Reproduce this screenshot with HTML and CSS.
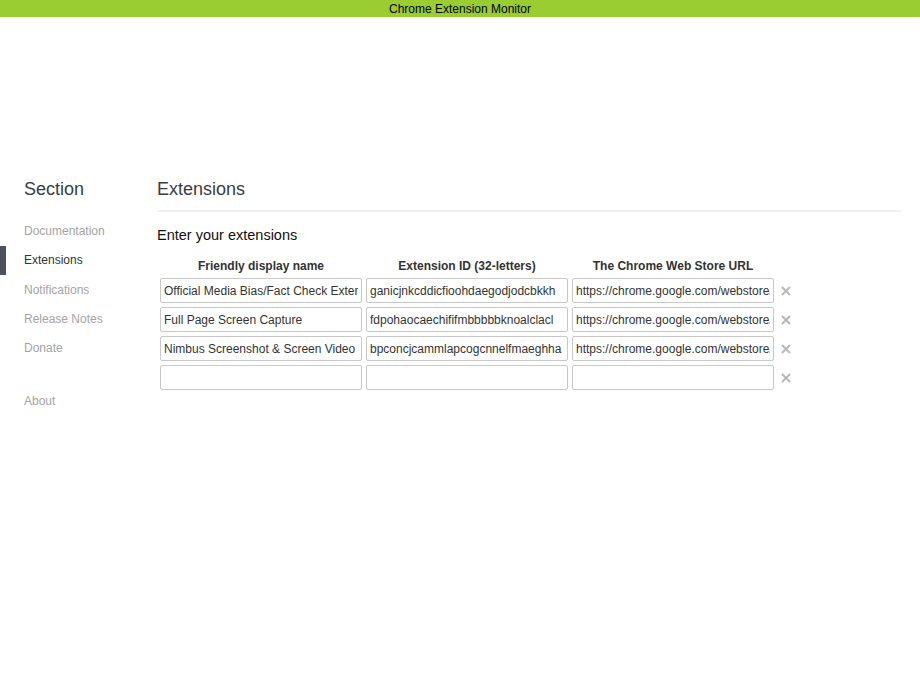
FILE: index.html
```html
<!DOCTYPE html>
<html>
<head>
<meta charset="utf-8">
<title>Chrome Extension Monitor</title>
<link rel="stylesheet" href="styles.css">
</head>
<body>
<div class="topbar">Chrome Extension Monitor</div>
<div class="layout">
  <aside class="sidebar">
    <h1 class="side-title">Section</h1>
    <ul class="nav">
      <li class="nav-item">Documentation</li>
      <li class="nav-item active">Extensions</li>
      <li class="nav-item">Notifications</li>
      <li class="nav-item">Release Notes</li>
      <li class="nav-item">Donate</li>
      <li class="nav-item about">About</li>
    </ul>
  </aside>
  <main class="main">
    <h1 class="page-title">Extensions</h1>
    <h2 class="subtitle">Enter your extensions</h2>
    <div class="ext-grid">
      <div class="col-head">Friendly display name</div>
      <div class="col-head">Extension ID (32-letters)</div>
      <div class="col-head">The Chrome Web Store URL</div>
      <div></div>

      <input class="field" type="text" value="Official Media Bias/Fact Check Extension">
      <input class="field" type="text" value="ganicjnkcddicfioohdaegodjodcbkkh">
      <input class="field" type="text" value="https://chrome.google.com/webstore/detail/ganicjnkcddicfioohdaegodjodcbkkh">
      <span class="remove"><svg viewBox="0 0 10 10" width="10" height="10"><path d="M1 1L9 9M9 1L1 9" stroke="#b8b8b8" stroke-width="2" fill="none"/></svg></span>

      <input class="field" type="text" value="Full Page Screen Capture">
      <input class="field" type="text" value="fdpohaocaechififmbbbbbknoalclacl">
      <input class="field" type="text" value="https://chrome.google.com/webstore/detail/fdpohaocaechififmbbbbbknoalclacl">
      <span class="remove"><svg viewBox="0 0 10 10" width="10" height="10"><path d="M1 1L9 9M9 1L1 9" stroke="#b8b8b8" stroke-width="2" fill="none"/></svg></span>

      <input class="field" type="text" value="Nimbus Screenshot &amp; Screen Video Recorder">
      <input class="field" type="text" value="bpconcjcammlapcogcnnelfmaeghha">
      <input class="field" type="text" value="https://chrome.google.com/webstore/detail/bpconcjcammlapcogcnnelfmaeghhagj">
      <span class="remove"><svg viewBox="0 0 10 10" width="10" height="10"><path d="M1 1L9 9M9 1L1 9" stroke="#b8b8b8" stroke-width="2" fill="none"/></svg></span>

      <input class="field" type="text" value="">
      <input class="field" type="text" value="">
      <input class="field" type="text" value="">
      <span class="remove"><svg viewBox="0 0 10 10" width="10" height="10"><path d="M1 1L9 9M9 1L1 9" stroke="#b8b8b8" stroke-width="2" fill="none"/></svg></span>
    </div>
  </main>
</div>
</body>
</html>
```

FILE: styles.css
```css
html, body {
  margin: 0;
  padding: 0;
  background: #fff;
  font-family: "Liberation Sans", Arial, sans-serif;
  color: #333;
}

.topbar {
  height: 17px;
  line-height: 18px;
  background: #9acd32;
  color: #000;
  font-size: 12px;
  text-align: center;
}

.layout {
  display: flex;
  margin-top: 161px;
}

.sidebar {
  width: 157px;
  flex: none;
}

.side-title {
  margin: 0 0 17px 24px;
  font-size: 18px;
  font-weight: normal;
  line-height: 22px;
  color: #383d44;
}

.nav {
  list-style: none;
  margin: 0;
  padding: 0;
}

.nav-item {
  height: 29.3px;
  line-height: 29.3px;
  padding-left: 24px;
  font-size: 12px;
  color: #a3a3a3;
  position: relative;
}

.nav-item.active {
  color: #333;
}

.nav-item.active::before {
  content: "";
  position: absolute;
  left: 0;
  top: 0;
  width: 6px;
  height: 29px;
  background: #4b525c;
}

.nav-item.about {
  margin-top: 23.5px;
}

.main {
  flex: 1;
  padding-right: 19px;
}

.page-title {
  margin: 0;
  padding-bottom: 10px;
  font-size: 18px;
  font-weight: normal;
  line-height: 22px;
  color: #383d44;
  border-bottom: 2px solid #f0f0f0;
}

.subtitle {
  margin: 14px 0 0 0;
  font-size: 14.5px;
  font-weight: normal;
  line-height: 18px;
  color: #111;
}

.ext-grid {
  display: grid;
  grid-template-columns: 202px 202px 202px 24px;
  column-gap: 4px;
  row-gap: 4px;
  margin: 15px 0 0 3px;
  align-items: center;
}

.col-head {
  font-size: 12px;
  font-weight: bold;
  line-height: 14px;
  text-align: center;
  color: #333;
  margin-bottom: 1px;
}

.field {
  box-sizing: border-box;
  width: 202px;
  height: 25px;
  margin: 0;
  padding: 0 3px;
  border: 1px solid #c8c8c8;
  border-radius: 2px;
  font-family: "Liberation Sans", Arial, sans-serif;
  font-size: 12px;
  color: #333;
  background: #fff;
  outline: none;
}

.remove {
  display: flex;
  align-items: center;
  padding-left: 3px;
  height: 25px;
}
```
